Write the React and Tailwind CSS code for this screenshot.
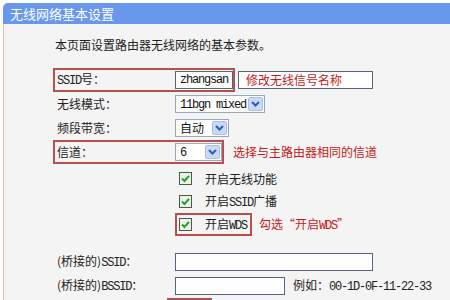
import React from "react";

const Latin = ({ children }) => (
  <span className="font-['Liberation_Mono',monospace] text-[12px] tracking-[-1.2px]">
    {children}
  </span>
);

const Chevron = () => (
  <svg width="9" height="6" viewBox="0 0 9 6">
    <path d="M1 1 L4.5 4.5 L8 1" fill="none" stroke="#2d5cc0" strokeWidth="2" />
  </svg>
);

const Select = ({ value, width }) => (
  <div
    className="flex h-[18px] items-center border border-[#9aa8b8] bg-white"
    style={{ width }}
  >
    <div className="flex-1 pl-[4px] text-[12px] leading-[16px] text-[#111]">{value}</div>
    <div className="mr-[1px] flex h-[14px] w-[15px] items-center justify-center rounded-[2px] border border-[#a8bde8] bg-[#c9d9f7]">
      <Chevron />
    </div>
  </div>
);

const Checkbox = () => (
  <svg width="13" height="13" viewBox="0 0 13 13">
    <rect x="0.5" y="0.5" width="12" height="12" fill="#eef0ea" stroke="#4a5a4a" />
    <path d="M3 6.5 L5.5 9 L10 3.8" fill="none" stroke="#21a121" strokeWidth="2" />
  </svg>
);

const Row = ({ label, boxed, children }) => (
  <div
    className={`flex h-[24px] w-fit items-center border-2 pl-[2px] ${
      boxed ? "border-[#b5504f]" : "border-transparent"
    }`}
  >
    <div className="w-[118px] text-[12px] text-[#222]">{label}</div>
    {children}
  </div>
);

const CheckRow = ({ text, boxed }) => (
  <div className="flex h-[23px] items-center pl-[122px]">
    <div
      className={`flex h-[23px] items-center border-2 pl-[2px] pr-[3px] ${
        boxed ? "border-[#b5504f]" : "border-transparent"
      }`}
    >
      <Checkbox />
      <span className="ml-[13px] text-[12px] text-[#222]">{text}</span>
    </div>
  </div>
);

export default function App() {
  return (
    <div className="h-[300px] w-[450px] overflow-hidden bg-white font-['Noto_Sans_CJK_SC',sans-serif] leading-none">
      <div className="ml-[3px] mt-[3px] h-[21px] rounded-tl-[5px] bg-[#6898ec] pl-[7px] text-[13px] leading-[21px] text-white">
        无线网络基本设置
      </div>
      <div className="ml-[3px] h-[276px] border-l border-[#d9cb9c] bg-[#f4f4f4] pl-[49px]">
        <div className="pl-[2px] pt-[15px] text-[12px] text-[#222]">
          本页面设置路由器无线网络的基本参数。
        </div>

        <div className="mt-[17px] flex items-center">
          <Row label={<><Latin>SSID</Latin>号：</>} boxed>
            <div className="flex h-[18px] w-[58px] items-center border border-[#55667a] bg-white pl-[4px] text-[#111]">
              <Latin>zhangsan</Latin>
            </div>
          </Row>
          <div className="ml-[3px] flex h-[18px] w-[135px] items-center border border-[#55667a] bg-white pl-[7px] text-[12px] text-[#c41a1a]">
            修改无线信号名称
          </div>
        </div>

        <Row label="无线模式：">
          <Select value={<Latin>11bgn mixed</Latin>} width={90} />
        </Row>
        <Row label="频段带宽：">
          <Select value="自动" width={54} />
        </Row>
        <div className="flex items-center">
          <Row label="信道：" boxed>
            <Select value={<Latin>6</Latin>} width={47} />
          </Row>
          <span className="ml-[9px] text-[12px] text-[#c41a1a]">选择与主路由器相同的信道</span>
        </div>

        <div className="mt-[3px]">
          <CheckRow text="开启无线功能" />
          <CheckRow text={<>开启<Latin>SSID</Latin>广播</>} />
          <div className="flex items-center">
            <CheckRow text={<>开启<Latin>WDS</Latin></>} boxed />
            <span className="ml-[7px] text-[12px] text-[#c41a1a]">
              勾选“开启<Latin>WDS</Latin>”
            </span>
          </div>
        </div>

        <div className="mt-[14px]">
          <Row label={<>(桥接的)<Latin>SSID</Latin>：</>}>
            <div className="h-[18px] w-[198px] border border-[#55667a] bg-white" />
          </Row>
          <div className="flex items-center">
            <Row label={<>(桥接的)<Latin>BSSID</Latin>：</>}>
              <div className="h-[18px] w-[110px] border border-[#55667a] bg-white" />
            </Row>
            <span className="ml-[6px] text-[12px] text-[#222]">
              例如：<Latin>00-1D-0F-11-22-33</Latin>
            </span>
          </div>
          <div className="ml-[114px] h-[10px] w-[45px] border-2 border-[#b5504f]" />
        </div>
      </div>
    </div>
  );
}
